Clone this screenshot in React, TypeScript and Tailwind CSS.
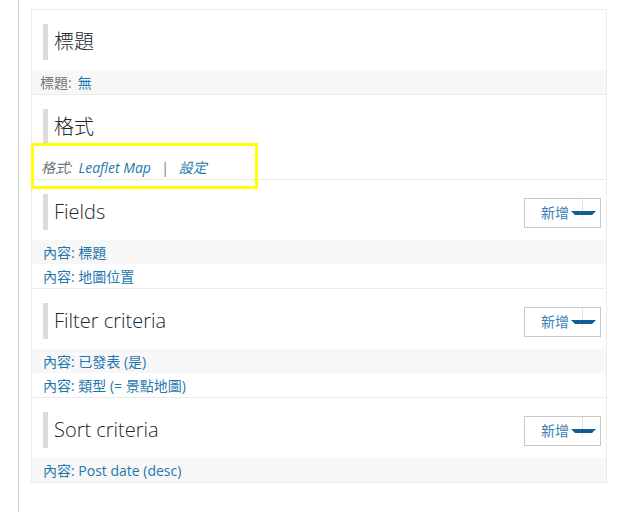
const font = "font-['Open_Sans','Noto_Sans_CJK_TC',sans-serif]";

const ArrowIcon = () => (
  <svg width="25" height="8" viewBox="0 0 25 8" className="relative block">
    <polygon points="0,2 25,2 21,6 4,6" fill="#0f5f96" />
  </svg>
);

const AddButton = () => (
  <div className="flex items-center h-[30px] w-[77px] border border-[#c8c8c8] bg-white pl-[16px]">
    <span className="text-[14px] text-[#3b82b8] leading-none">新增</span>
    <span className="relative ml-[2px] flex items-center">
      <span className="absolute left-[11px] top-[-10px] h-[20px] w-px bg-[#e2e2e2]" />
      <ArrowIcon />
    </span>
  </div>
);

const Heading = ({ title, button }: { title: string; button?: boolean }) => (
  <div className="flex items-start justify-between h-[60px] pt-[14px] pl-[11px] pr-[5px]">
    <div className="flex items-center h-[36px] border-l-[5px] border-[#dcdcdc] pl-[6px]">
      <h3 className="text-[20px] font-light text-[#23282d]">{title}</h3>
    </div>
    {button && (
      <div className="pt-[4px]">
        <AddButton />
      </div>
    )}
  </div>
);

const Row = ({ children, gray }: { children: React.ReactNode; gray?: boolean }) => (
  <div
    className={`flex items-center h-[24px] pl-[11px] text-[14px] text-[#1f78ad] ${
      gray ? "bg-[#f7f7f7]" : "bg-white"
    }`}
  >
    {children}
  </div>
);

export default function App() {
  return (
    <div className={`flex h-[512px] w-[624px] bg-white ${font}`}>
      <div className="w-[18px]" />
      <div className="border-l border-[#d0d0d0] pl-[12px] pt-[9px]">
        <div className="relative w-[576px] border border-[#ebebeb]">
          {/* title */}
          <div className="border-b border-[#ebebeb]">
            <Heading title="標題" />
            <div className="flex items-center h-[24px] pl-[8px] bg-[#f7f7f7] text-[14px]">
              <span className="text-[#72777c]">標題:</span>
              <span className="ml-[6px] text-[#1f78ad]">無</span>
            </div>
          </div>
          {/* format */}
          <div className="border-b border-[#ebebeb]">
            <Heading title="格式" />
            <div className="flex items-center h-[24px] pl-[9px] italic text-[14px]">
              <span className="text-[#72777c]">格式:</span>
              <span className="ml-[6px] text-[#1f78ad]">Leaflet Map</span>
              <span className="ml-[10px] mr-[10px] text-[#72777c]">|</span>
              <span className="text-[#1f78ad]">設定</span>
            </div>
          </div>
          {/* fields */}
          <div className="border-b border-[#ebebeb]">
            <Heading title="Fields" button />
            <Row gray>內容: 標題</Row>
            <Row>內容: 地圖位置</Row>
          </div>
          {/* filter */}
          <div className="border-b border-[#ebebeb]">
            <Heading title="Filter criteria" button />
            <Row gray>內容: 已發表 (是)</Row>
            <Row>內容: 類型 (= 景點地圖)</Row>
          </div>
          {/* sort */}
          <div>
            <Heading title="Sort criteria" button />
            <Row gray>內容: Post date (desc)</Row>
          </div>
          {/* highlight */}
          <div className="absolute left-[-1px] top-[133px] h-[46px] w-[227px] border-[3px] border-[#ffff00]" />
        </div>
      </div>
    </div>
  );
}
